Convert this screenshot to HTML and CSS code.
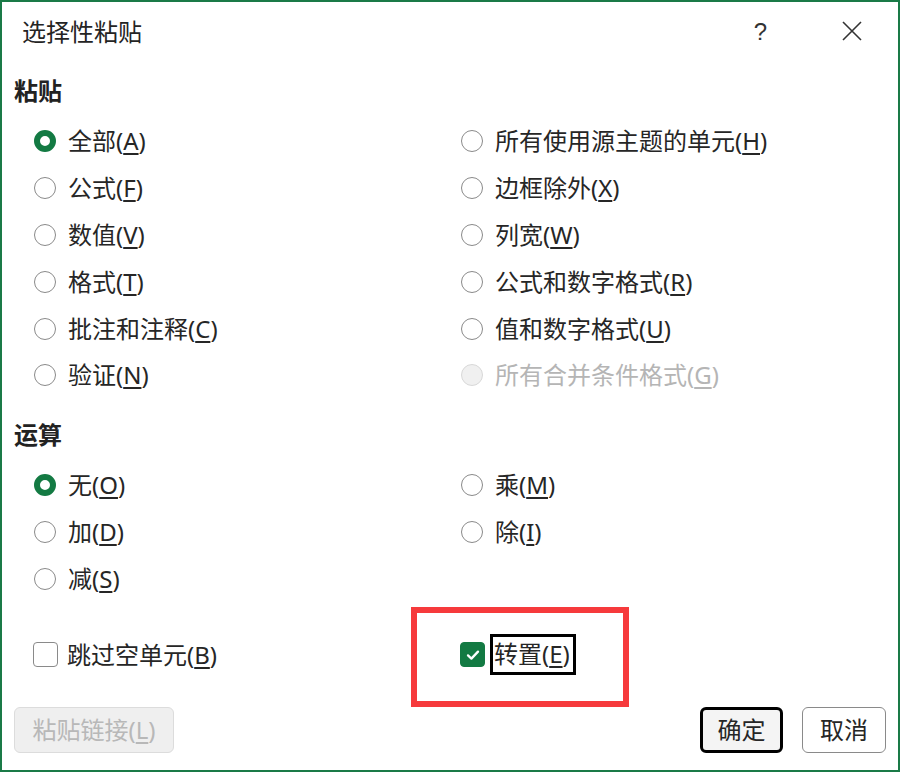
FILE: index.html
```html
<!DOCTYPE html>
<html lang="zh-CN">
<head>
<meta charset="utf-8">
<title>选择性粘贴</title>
<link rel="stylesheet" href="styles.css">
</head>
<body>
<div class="dialog">
  <div class="titlebar">
    <div class="title">选择性粘贴</div>
    <div class="title-actions">
      <span class="help">?</span>
      <svg class="close" width="22" height="22" viewBox="0 0 22 22"><path d="M2 2 L20 20 M20 2 L2 20" stroke="#333" stroke-width="1.6" fill="none"/></svg>
    </div>
  </div>

  <div class="section-title">粘贴</div>
  <div class="grid paste-grid">
    <label class="opt"><span class="radio on"></span><span>全部(<u>A</u>)</span></label>
    <label class="opt"><span class="radio"></span><span>所有使用源主题的单元(<u>H</u>)</span></label>
    <label class="opt"><span class="radio"></span><span>公式(<u>F</u>)</span></label>
    <label class="opt"><span class="radio"></span><span>边框除外(<u>X</u>)</span></label>
    <label class="opt"><span class="radio"></span><span>数值(<u>V</u>)</span></label>
    <label class="opt"><span class="radio"></span><span>列宽(<u>W</u>)</span></label>
    <label class="opt"><span class="radio"></span><span>格式(<u>T</u>)</span></label>
    <label class="opt"><span class="radio"></span><span>公式和数字格式(<u>R</u>)</span></label>
    <label class="opt"><span class="radio"></span><span>批注和注释(<u>C</u>)</span></label>
    <label class="opt"><span class="radio"></span><span>值和数字格式(<u>U</u>)</span></label>
    <label class="opt"><span class="radio"></span><span>验证(<u>N</u>)</span></label>
    <label class="opt disabled"><span class="radio"></span><span>所有合并条件格式(<u>G</u>)</span></label>
  </div>

  <div class="section-title op-title">运算</div>
  <div class="grid op-grid">
    <label class="opt"><span class="radio on"></span><span>无(<u>O</u>)</span></label>
    <label class="opt"><span class="radio"></span><span>乘(<u>M</u>)</span></label>
    <label class="opt"><span class="radio"></span><span>加(<u>D</u>)</span></label>
    <label class="opt"><span class="radio"></span><span>除(<u>I</u>)</span></label>
    <label class="opt"><span class="radio"></span><span>减(<u>S</u>)</span></label>
  </div>

  <div class="grid check-grid">
    <label class="opt chk"><span class="checkbox"></span><span>跳过空单元(<u>B</u>)</span></label>
    <label class="opt chk transpose">
      <span class="checkbox checked"><svg width="16" height="16" viewBox="0 0 16 16"><path d="M3 8.4 L6.4 11.6 L13 4.6" stroke="#fff" stroke-width="2.3" fill="none" stroke-linecap="round" stroke-linejoin="round"/></svg></span>
      <span class="focus">转置(<u>E</u>)</span>
      <span class="highlight"></span>
    </label>
  </div>

  <div class="buttons">
    <button class="btn disabled-btn">粘贴链接(<u>L</u>)</button>
    <div class="right-btns">
      <button class="btn primary">确定</button>
      <button class="btn">取消</button>
    </div>
  </div>
</div>
</body>
</html>
```

FILE: styles.css
```css
* { box-sizing: border-box; }
html, body { margin: 0; padding: 0; background: #fff; }
body {
  font-family: "Noto Sans", "Noto Sans CJK SC", sans-serif;
  color: #262626;
  font-size: 24px;
}
.dialog {
  width: 900px;
  height: 772px;
  border: 2px solid #1a7a47;
  display: flex;
  flex-direction: column;
  background: #fff;
}
.titlebar {
  height: 66px;
  padding: 0 0 6px 20px;
  display: flex;
  align-items: center;
  justify-content: space-between;
}
.title { font-size: 24px; line-height: 30px; color: #242424; }
.title-actions {
  display: flex;
  align-items: center;
  margin-right: 35px;
}
.help {
  font-family: "Liberation Sans", sans-serif;
  font-size: 24px;
  line-height: 30px;
  color: #333;
  margin-right: 74px;
}
.close { display: block; margin-top: -2px; }
.section-title {
  height: 46px;
  line-height: 46px;
  padding-left: 12px;
  font-weight: 700;
  font-size: 24px;
  color: #222;
}
.op-title { margin-top: 13px; }
.grid {
  display: grid;
  grid-template-columns: 427px 1fr;
  padding-left: 32px;
}
.paste-grid { margin-top: 4px; grid-auto-rows: 46.8px; }
.op-grid { margin-top: 3.5px; grid-auto-rows: 47px; }
.check-grid { margin-top: 29px; grid-auto-rows: 47px; padding-left: 31px; }
.opt {
  display: flex;
  align-items: center;
  gap: 12px;
  line-height: 30px;
  white-space: nowrap;
}
.opt u { text-decoration-thickness: 1.5px; text-underline-offset: 3px; }
.radio {
  width: 22px;
  height: 22px;
  border-radius: 50%;
  border: 1.8px solid #8a8a8a;
  flex: none;
}
.radio.on {
  border: 6px solid #137a43;
}
.disabled { color: #b5b5b5; }
.disabled .radio { border-color: #d8d8d8; background: #f0f0f0; }
.chk { gap: 9px; }
.checkbox {
  width: 25px;
  height: 25px;
  border: 1.8px solid #8a8a8a;
  border-radius: 4px;
  flex: none;
  display: flex;
  align-items: center;
  justify-content: center;
}
.checkbox.checked {
  background: #137a43;
  border-color: #137a43;
  margin-left: 0;
}
.checkbox svg { display: block; }
.transpose { position: relative; gap: 5px; }
.focus {
  border: 3px solid #000;
  padding: 2px 3px 3px 1px;
  line-height: 30px;
}
.highlight {
  position: absolute;
  left: -49px;
  top: -24px;
  width: 218px;
  height: 100px;
  border: 6.5px solid #f63a3c;
  pointer-events: none;
}
.buttons {
  margin-top: 28.5px;
  display: flex;
  justify-content: space-between;
  padding: 0 12px;
}
.right-btns { display: flex; gap: 19px; }
.btn {
  font-family: "Noto Sans", "Noto Sans CJK SC", sans-serif;
  font-size: 24px;
  color: #262626;
  height: 46px;
  width: 84px;
  padding: 0;
  background: #fff;
  border: 1.6px solid #8a8a8a;
  border-radius: 6px;
  line-height: 30px;
}
.btn.primary {
  width: 83px;
  border: 3px solid #000;
  background: #f4f4f4;
}
.disabled-btn {
  width: 160px;
  background: #efefef;
  border: 1.5px solid #dcdcdc;
  color: #b8b8b8;
}
.disabled-btn u { text-decoration-thickness: 1.5px; text-underline-offset: 3px; }
```
